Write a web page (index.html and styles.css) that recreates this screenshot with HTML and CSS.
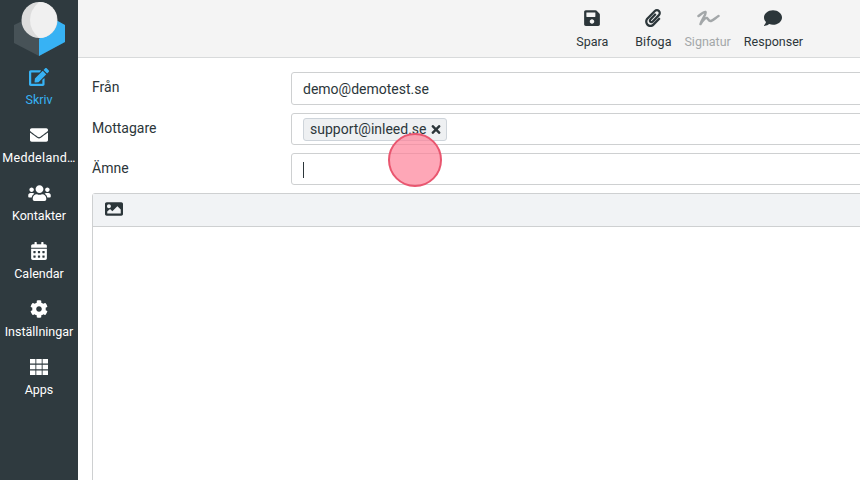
FILE: index.html
```html
<!DOCTYPE html>
<html lang="sv">
<head>
  <meta charset="UTF-8" />
  <meta name="viewport" content="width=device-width, initial-scale=1.0"/>
  <title>Skriv</title>
  <link rel="stylesheet" href="styles.css">
</head>
<body>

<div class="app">
  <aside class="sidebar">
    <div class="logo">
      <svg viewBox="0 0 78 60" width="78" height="60">
        <path d="M14 25 L39 13 L65 25 L65 42 L39 56 L14 43 Z" fill="#475257"/>
        <path d="M56 20 L65 25 L65 42 L39 56 L39 39 Z" fill="#37b2f4"/>
        <circle cx="39.5" cy="20" r="18" fill="#dcdcdc"/>
        <path d="M39 2 A18 18 0 0 1 39 38 Q30 30 30 20 Q30 10 39 2 Z" fill="#f0f0f0"/>
      </svg>
    </div>
    <nav class="nav">
      <a class="nav-item active" href="#">
        <svg viewBox="0 0 576 512" width="20" height="18"><path d="M402.6 83.2l90.2 90.2c3.8 3.8 3.8 10 0 13.8L274.4 405.6l-92.8 10.3c-12.4 1.4-22.9-9.1-21.5-21.5l10.3-92.8L388.8 83.2c3.8-3.8 10-3.8 13.8 0zm162-22.9l-48.8-48.8c-15.2-15.2-39.9-15.2-55.2 0l-35.4 35.4c-3.8 3.8-3.8 10 0 13.8l90.2 90.2c3.8 3.8 10 3.8 13.8 0l35.4-35.4c15.2-15.3 15.2-40 0-55.2zM384 346.2V448H64V128h229.8c3.2 0 6.2-1.3 8.5-3.5l40-40c7.6-7.6 2.2-20.5-8.5-20.5H48C21.5 64 0 85.5 0 112v352c0 26.5 21.5 48 48 48h352c26.5 0 48-21.5 48-48V306.2c0-10.7-12.9-16-20.5-8.5l-40 40c-2.2 2.3-3.5 5.3-3.5 8.5z"/></svg>
        <span>Skriv</span>
      </a>
      <a class="nav-item nav-item-long" href="#">
        <svg viewBox="0 0 512 512" width="18" height="18"><path d="M502.3 190.8c3.9-3.1 9.7-.2 9.7 4.7V400c0 26.5-21.5 48-48 48H48c-26.5 0-48-21.5-48-48V195.6c0-5 5.7-7.8 9.7-4.7 22.4 17.4 52.1 39.5 154.1 113.6 21.1 15.4 56.7 47.8 92.2 47.6 35.7.3 72-32.8 92.3-47.6 102-74.1 131.6-96.3 154-113.7zM256 320c23.2.4 56.6-29.2 73.4-41.4 132.7-96.3 142.8-104.7 173.4-128.7 5.8-4.5 9.2-11.5 9.2-18.9v-19c0-26.5-21.5-48-48-48H48C21.5 64 0 85.5 0 112v19c0 7.4 3.4 14.3 9.2 18.9 30.6 23.9 40.7 32.4 173.4 128.7 16.8 12.2 50.2 41.8 73.4 41.4z"/></svg>
        <span>Meddeland…</span>
      </a>
      <a class="nav-item" href="#">
        <svg viewBox="0 0 640 512" width="23" height="18"><path d="M96 224c35.3 0 64-28.7 64-64s-28.7-64-64-64-64 28.7-64 64 28.7 64 64 64zm448 0c35.3 0 64-28.7 64-64s-28.7-64-64-64-64 28.7-64 64 28.7 64 64 64zm32 32h-64c-17.6 0-33.5 7.1-45.1 18.6 40.3 22.1 68.9 62 75.1 109.4h66c17.7 0 32-14.3 32-32v-32c0-35.3-28.7-64-64-64zm-256 0c61.9 0 112-50.1 112-112S381.9 32 320 32 208 82.1 208 144s50.1 112 112 112zm76.8 32h-8.3c-20.8 10-43.9 16-68.5 16s-47.6-6-68.5-16h-8.3C179.6 288 128 339.6 128 403.2V432c0 26.5 21.5 48 48 48h288c26.5 0 48-21.5 48-48v-28.8c0-63.6-51.6-115.2-115.2-115.2zm-223.7-13.4C161.5 263.1 145.6 256 128 256H64c-35.3 0-64 28.7-64 64v32c0 17.7 14.3 32 32 32h65.9c6.3-47.4 34.9-87.3 75.2-109.4z"/></svg>
        <span>Kontakter</span>
      </a>
      <a class="nav-item" href="#">
        <svg viewBox="0 0 448 512" width="16" height="18"><path d="M0 464c0 26.5 21.5 48 48 48h352c26.5 0 48-21.5 48-48V192H0v272zm320-196c0-6.6 5.4-12 12-12h40c6.6 0 12 5.4 12 12v40c0 6.6-5.4 12-12 12h-40c-6.6 0-12-5.4-12-12v-40zm0 128c0-6.6 5.4-12 12-12h40c6.6 0 12 5.4 12 12v40c0 6.6-5.4 12-12 12h-40c-6.6 0-12-5.4-12-12v-40zM192 268c0-6.6 5.4-12 12-12h40c6.6 0 12 5.4 12 12v40c0 6.6-5.4 12-12 12h-40c-6.6 0-12-5.4-12-12v-40zm0 128c0-6.6 5.4-12 12-12h40c6.6 0 12 5.4 12 12v40c0 6.6-5.4 12-12 12h-40c-6.6 0-12-5.4-12-12v-40zM64 268c0-6.6 5.4-12 12-12h40c6.6 0 12 5.4 12 12v40c0 6.6-5.4 12-12 12H76c-6.6 0-12-5.4-12-12v-40zm0 128c0-6.6 5.4-12 12-12h40c6.6 0 12 5.4 12 12v40c0 6.6-5.4 12-12 12H76c-6.6 0-12-5.4-12-12v-40zM400 64h-48V16c0-8.8-7.2-16-16-16h-32c-8.8 0-16 7.2-16 16v48H160V16c0-8.8-7.2-16-16-16h-32c-8.8 0-16 7.2-16 16v48H48C21.5 64 0 85.5 0 112v48h448v-48c0-26.5-21.5-48-48-48z"/></svg>
        <span>Calendar</span>
      </a>
      <a class="nav-item" href="#">
        <svg viewBox="0 0 512 512" width="18" height="18"><path d="M487.4 315.7l-42.6-24.6c4.3-23.2 4.3-47 0-70.2l42.6-24.6c4.9-2.8 7.1-8.6 5.5-14-11.1-35.6-30-67.8-54.7-94.6-3.8-4.1-10-5.1-14.8-2.3L380.8 110c-17.9-15.4-38.5-27.3-60.8-35.1V25.8c0-5.6-3.9-10.5-9.4-11.7-36.7-8.2-74.3-7.8-109.2 0-5.5 1.2-9.4 6.1-9.4 11.7V75c-22.2 7.9-42.8 19.8-60.8 35.1L88.7 85.5c-4.9-2.8-11-1.9-14.8 2.3-24.7 26.7-43.6 58.9-54.7 94.6-1.7 5.4.6 11.2 5.5 14L67.3 221c-4.3 23.2-4.3 47 0 70.2l-42.6 24.6c-4.9 2.8-7.1 8.6-5.5 14 11.1 35.6 30 67.8 54.7 94.6 3.8 4.1 10 5.1 14.8 2.3l42.6-24.6c17.9 15.4 38.5 27.3 60.8 35.1v49.2c0 5.6 3.9 10.5 9.4 11.7 36.7 8.2 74.3 7.8 109.2 0 5.5-1.2 9.4-6.1 9.4-11.7v-49.2c22.2-7.9 42.8-19.8 60.8-35.1l42.6 24.6c4.9 2.8 11 1.9 14.8-2.3 24.7-26.7 43.6-58.9 54.7-94.6 1.5-5.5-.7-11.3-5.6-14.1zM256 336c-44.1 0-80-35.9-80-80s35.9-80 80-80 80 35.9 80 80-35.9 80-80 80z"/></svg>
        <span>Inställningar</span>
      </a>
      <a class="nav-item" href="#">
        <svg viewBox="0 0 18 18" width="18" height="18"><path d="M0 1h5.4v4.6H0zM6.3 1h5.4v4.6H6.3zM12.6 1H18v4.6h-5.4zM0 6.7h5.4v4.6H0zM6.3 6.7h5.4v4.6H6.3zM12.6 6.7H18v4.6h-5.4zM0 12.4h5.4V17H0zM6.3 12.4h5.4V17H6.3zM12.6 12.4H18V17h-5.4z"/></svg>
        <span>Apps</span>
      </a>
    </nav>
  </aside>

  <main class="main">
    <div class="toolbar">
      <a class="tool tool-save" href="#">
        <svg viewBox="0 0 448 512" width="16" height="18"><path d="M433.941 129.941l-83.882-83.882A48 48 0 0 0 316.118 32H48C21.49 32 0 53.49 0 80v352c0 26.51 21.49 48 48 48h352c26.51 0 48-21.49 48-48V163.882a48 48 0 0 0-14.059-33.941zM224 416c-35.346 0-64-28.654-64-64 0-35.346 28.654-64 64-64s64 28.654 64 64c0 35.346-28.654 64-64 64zm96-304.52V212c0 6.627-5.373 12-12 12H76c-6.627 0-12-5.373-12-12V108c0-6.627 5.373-12 12-12h228.52c3.183 0 6.235 1.264 8.485 3.515l3.48 3.48A11.996 11.996 0 0 1 320 111.48z"/></svg>
        <span>Spara</span>
      </a>
      <a class="tool tool-attach" href="#">
        <svg viewBox="0 0 448 512" width="16" height="18"><path d="M43.246 466.142c-58.43-60.289-57.341-157.511 1.386-217.581L254.392 34c44.316-45.332 116.351-45.336 160.671 0 43.89 44.894 43.943 117.329 0 162.276L232.214 383.128c-29.855 30.537-78.633 30.111-107.982-.998-28.275-29.97-27.368-77.473 1.452-106.953l143.743-146.835c6.182-6.314 16.312-6.422 22.626-.241l22.861 22.379c6.315 6.182 6.422 16.312.241 22.626L171.427 319.927c-4.932 5.045-5.236 13.428-.648 18.292 4.372 4.634 11.245 4.711 15.688.165l182.849-186.851c19.613-20.062 19.613-52.725-.011-72.798-19.189-19.627-49.957-19.637-69.154 0L90.39 293.295c-34.763 35.56-35.299 93.12-1.191 128.313 34.01 35.093 88.985 35.137 123.058.286l172.06-175.999c6.177-6.319 16.307-6.433 22.626-.256l22.877 22.364c6.319 6.177 6.434 16.307.256 22.626l-172.06 175.998c-59.576 60.938-155.943 60.216-214.77-.485z"/></svg>
        <span>Bifoga</span>
      </a>
      <a class="tool tool-sign disabled" href="#">
        <svg viewBox="0 0 24 18" width="24" height="18"><path d="M2.5 7 C5 5 8 2.5 9.5 3 C11 4 6 10 4.5 15 C7 11 9.5 8.5 11 9 C12.5 10 12.5 12.5 15 12 C17 11.5 20 8.5 22.5 7" fill="none" stroke="currentColor" stroke-width="2.5" stroke-linecap="round" stroke-linejoin="round"/></svg>
        <span>Signatur</span>
      </a>
      <a class="tool tool-reply" href="#">
        <svg viewBox="0 0 512 512" width="18" height="18"><path d="M256 32C114.6 32 0 125.1 0 240c0 49.6 21.4 95 57 130.7C44.5 421.1 2.7 466 2.2 466.5c-2.2 2.3-2.8 5.7-1.5 8.7S4.8 480 8 480c66.3 0 116-31.8 140.6-51.4 32.7 12.3 69 19.4 107.4 19.4 141.4 0 256-93.1 256-208S397.4 32 256 32z"/></svg>
        <span>Responser</span>
      </a>
    </div>

    <form class="compose">
      <div class="row row-from">
        <label>Från</label>
        <div class="field">demo@demotest.se</div>
      </div>
      <div class="row row-to">
        <label>Mottagare</label>
        <div class="field field-tags">
          <span class="tag">support@inleed.se
            <svg viewBox="0 0 352 512" width="10" height="13"><path d="M242.72 256l100.07-100.07c12.28-12.28 12.28-32.19 0-44.48l-22.24-22.24c-12.28-12.28-32.19-12.28-44.48 0L176 189.28 75.93 89.21c-12.28-12.28-32.19-12.28-44.48 0L9.21 111.45c-12.28 12.28-12.28 32.19 0 44.48L109.28 256 9.21 356.07c-12.28 12.28-12.28 32.19 0 44.48l22.24 22.24c12.28 12.28 32.2 12.28 44.48 0L176 322.72l100.07 100.07c12.28 12.28 32.2 12.28 44.48 0l22.24-22.24c12.28-12.28 12.28-32.19 0-44.48L242.72 256z"/></svg>
          </span>
        </div>
      </div>
      <div class="row row-subject">
        <label>Ämne</label>
        <div class="field"><span class="caret"></span></div>
      </div>

      <div class="editor">
        <div class="editor-bar">
          <svg viewBox="0 0 512 512" width="18" height="18"><path d="M464 448H48c-26.51 0-48-21.49-48-48V112c0-26.51 21.49-48 48-48h416c26.51 0 48 21.49 48 48v288c0 26.51-21.49 48-48 48zM112 120c-30.928 0-56 25.072-56 56s25.072 56 56 56 56-25.072 56-56-25.072-56-56-56zM64 384h384V272l-87.515-87.515c-4.686-4.686-12.284-4.686-16.971 0L208 320l-55.515-55.515c-4.686-4.686-12.284-4.686-16.971 0L64 328v56z"/></svg>
        </div>
      </div>
    </form>
  </main>
</div>

<!-- click marker from the screen recording -->
<div class="click-dot"></div>

</body>
</html>
```

FILE: styles.css
```css
* { box-sizing: border-box; }

html, body {
  height: 100%;
}

body {
  margin: 0;
  font-family: Roboto, "Liberation Sans", sans-serif;
  color: #2c363a;
  background: #fff;
  overflow: hidden;
}

a {
  text-decoration: none;
  color: inherit;
}

svg {
  display: block;
  fill: currentColor;
}

.app {
  display: flex;
  height: 480px;
}

/* left menu */
.sidebar {
  width: 78px;
  flex: none;
  background: #2f3a3f;
  color: #fff;
}

.logo {
  height: 66px;
}

.nav {
  display: flex;
  flex-direction: column;
}

.nav-item {
  height: 58px;
  display: flex;
  flex-direction: column;
  align-items: center;
  font-size: 12.5px;
  line-height: 14px;
  white-space: nowrap;
  padding-top: 2px;
}

.nav-item svg {
  margin-bottom: 7px;
}

.nav-item-long span {
  letter-spacing: 0.3px;
}

.nav-item.active {
  color: #37b2f4;
}

/* top bar */
.main {
  flex: 1;
  min-width: 0;
}

.toolbar {
  height: 58px;
  display: flex;
  justify-content: flex-end;
  gap: 13px;
  background: #f4f4f4;
  border-bottom: 1px solid #d8dadb;
  padding: 9px 57px 0 0;
}

.tool {
  display: flex;
  flex-direction: column;
  align-items: center;
  font-size: 12.5px;
  line-height: 14px;
}

.tool svg {
  margin-bottom: 8px;
}

.tool.disabled {
  color: #a3a7a9;
}

.tool-save {
  margin-right: 14px;
}

/* compose form */
.compose {
  padding: 14px 0 0 14px;
}

.row {
  display: flex;
  align-items: center;
  height: 32px;
  margin-bottom: 8px;
  margin-right: -8px;
}

.row-from {
  height: 33px;
}

.row label {
  width: 199px;
  flex: none;
  font-size: 14px;
  padding-bottom: 3px;
}

.field {
  flex: 1;
  height: 100%;
  display: flex;
  align-items: center;
  padding: 0 11px;
  font-size: 14px;
  border: 1px solid #ced0d1;
  border-radius: 3px;
}

.tag {
  display: flex;
  align-items: center;
  gap: 4px;
  height: 23px;
  padding: 0 5px 0 6px;
  background: #eef0f2;
  border: 1px solid #ced4da;
  border-radius: 3px;
}

.caret {
  width: 1px;
  height: 16px;
  margin-top: 1px;
  background: #2c363a;
}

.editor {
  height: 300px;
  margin-right: -8px;
  border: 1px solid #ced0d1;
  border-radius: 3px 3px 0 0;
}

.editor-bar {
  height: 33px;
  display: flex;
  align-items: center;
  padding: 0 0 2px 12px;
  background: #f1f3f5;
  border-bottom: 1px solid #ced0d1;
}

/* click marker */
.click-dot {
  position: absolute;
  left: 387.5px;
  top: 133px;
  width: 54px;
  height: 54px;
  border-radius: 50%;
  background: rgba(253, 130, 152, 0.7);
  border: 2px solid #e9566f;
}
```
